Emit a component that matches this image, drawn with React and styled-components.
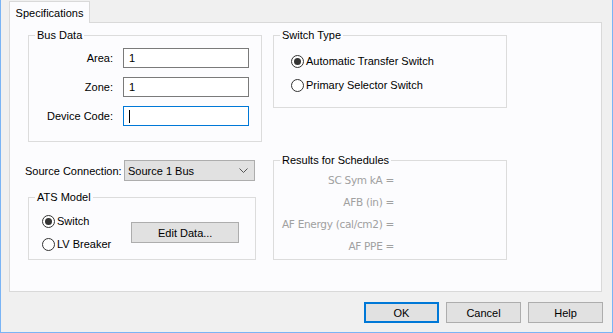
import React from "react";
import styled, { createGlobalStyle } from "styled-components";

const GlobalStyle = createGlobalStyle`
  html, body {
    margin: 0;
    padding: 0;
    background: #f0f0f0;
  }
  body {
    font-family: "Liberation Sans", Arial, sans-serif;
    font-size: 11px;
    color: #000;
  }
`;

const Window = styled.div`
  width: 613px;
  height: 333px;
  box-sizing: border-box;
  background: #f0f0f0;
  border: 1px solid #7ab4f5;
  border-top: none;
  display: flex;
  flex-direction: column;
`;

const TabStrip = styled.div`
  display: flex;
  padding: 1px 0 0 8px;
  height: 21px;
`;

const Tab = styled.div`
  width: 81px;
  box-sizing: border-box;
  border: 1px solid #d9d9d9;
  border-bottom: none;
  background: #fcfcfe;
  display: flex;
  align-items: center;
  justify-content: center;
  margin-bottom: -1px;
  position: relative;
  z-index: 1;
`;

const Panel = styled.div`
  margin-left: 8px;
  width: 593px;
  height: 270px;
  box-sizing: border-box;
  border: 1px solid #d9d9d9;
  background: #fcfcfe;
  padding: 12px 0 0 18px;
  display: grid;
  grid-template-columns: 234px 234px;
  grid-template-rows: 107px 100px;
  column-gap: 11px;
  row-gap: 18px;
  align-items: start;
`;

const Group = styled.div`
  position: relative;
  box-sizing: border-box;
  border: 1px solid #dcdcdc;
  width: ${(p) => p.$w || 234}px;
  height: ${(p) => p.$h}px;
  padding: ${(p) => p.$pad || "0"};
`;

const Legend = styled.span`
  position: absolute;
  top: -8px;
  left: 6px;
  padding: 0 2px;
  background: #fcfcfe;
  line-height: 14px;
`;

const FormRows = styled.div`
  display: flex;
  flex-direction: column;
  gap: 9px;
`;

const FieldRow = styled.div`
  display: flex;
  align-items: center;
  gap: 10px;
`;

const Label = styled.label`
  width: 84px;
  text-align: right;
`;

const TextBox = styled.div`
  width: 126px;
  height: 20px;
  box-sizing: border-box;
  border: 1px solid ${(p) => (p.$focus ? "#0078d7" : "#7a7a7a")};
  background: #fff;
  display: flex;
  align-items: center;
  padding-left: 5px;
`;

const Caret = styled.span`
  width: 1px;
  height: 13px;
  background: #000;
`;

const RadioList = styled.div`
  display: flex;
  flex-direction: column;
  gap: ${(p) => p.$gap}px;
`;

const RadioRow = styled.div`
  display: flex;
  align-items: center;
  gap: 2px;
  height: 14px;
  white-space: nowrap;
`;

const RadioCircle = styled.span`
  width: 13px;
  height: 13px;
  box-sizing: border-box;
  border-radius: 50%;
  border: 1px solid #333;
  background: #fff;
  display: flex;
  align-items: center;
  justify-content: center;
  &::after {
    content: "";
    width: 7px;
    height: 7px;
    border-radius: 50%;
    background: ${(p) => (p.$checked ? "#333" : "transparent")};
  }
`;

const LeftBottom = styled.div`
  display: flex;
  flex-direction: column;
  gap: 16px;
`;

const SourceRow = styled.div`
  display: flex;
  align-items: center;
  margin-left: -3px;
  height: 21px;
`;

const SourceLabel = styled.span`
  width: 99px;
  white-space: nowrap;
`;

const Select = styled.div`
  width: 131px;
  height: 21px;
  box-sizing: border-box;
  background: #e1e1e1;
  border: 1px solid #adadad;
  display: flex;
  align-items: center;
  justify-content: space-between;
  padding: 0 6px 0 3px;
`;

const AtsBody = styled.div`
  display: flex;
  align-items: center;
  gap: 20px;
`;

const Button = styled.button`
  width: ${(p) => p.$w || 75}px;
  height: 21px;
  box-sizing: border-box;
  margin: 0;
  background: #e1e1e1;
  border: ${(p) => (p.$default ? "2px solid #0078d7" : "1px solid #adadad")};
  font-family: inherit;
  font-size: 11px;
  color: #000;
  padding: 0;
`;

const Results = styled.div`
  display: grid;
  grid-template-columns: 120px;
  row-gap: 8px;
  padding-top: 12px;
  color: #a0a0a0;
  font-family: "DejaVu Sans", sans-serif;
  font-size: 10.5px;
  letter-spacing: -0.3px;
`;

const ResultLine = styled.div`
  text-align: right;
  line-height: 14px;
`;

const Footer = styled.div`
  display: flex;
  justify-content: flex-end;
  gap: 7px;
  padding: 10px 9px 0 0;
`;

const Chevron = () => (
  <svg width="9" height="6" viewBox="0 0 9 6">
    <path d="M0.5 0.5 L4.5 4.5 L8.5 0.5" fill="none" stroke="#555" strokeWidth="1" />
  </svg>
);

const Radio = ({ checked, children }) => (
  <RadioRow>
    <RadioCircle $checked={checked} />
    <span>{children}</span>
  </RadioRow>
);

const App = () => {
  return (
    <Window>
      <GlobalStyle />
      <TabStrip>
        <Tab>Specifications</Tab>
      </TabStrip>
      <Panel>
        <Group $h={107} $pad="12px 0 0 0">
          <Legend>Bus Data</Legend>
          <FormRows>
            <FieldRow>
              <Label>Area:</Label>
              <TextBox>1</TextBox>
            </FieldRow>
            <FieldRow>
              <Label>Zone:</Label>
              <TextBox>1</TextBox>
            </FieldRow>
            <FieldRow>
              <Label>Device Code:</Label>
              <TextBox $focus>
                <Caret />
              </TextBox>
            </FieldRow>
          </FormRows>
        </Group>
        <Group $h={73} $pad="18px 0 0 17px">
          <Legend>Switch Type</Legend>
          <RadioList $gap={10}>
            <Radio checked>Automatic Transfer Switch</Radio>
            <Radio>Primary Selector Switch</Radio>
          </RadioList>
        </Group>
        <LeftBottom>
          <SourceRow>
            <SourceLabel>Source Connection:</SourceLabel>
            <Select>
              <span>Source 1 Bus</span>
              <Chevron />
            </Select>
          </SourceRow>
          <Group $w={228} $h={63} $pad="16px 0 0 13px">
            <Legend>ATS Model</Legend>
            <AtsBody>
              <RadioList $gap={9}>
                <Radio checked>Switch</Radio>
                <Radio>LV Breaker</Radio>
              </RadioList>
              <Button $w={108}>Edit Data...</Button>
            </AtsBody>
          </Group>
        </LeftBottom>
        <Group $h={100}>
          <Legend>Results for Schedules</Legend>
          <Results>
            <ResultLine>SC Sym kA =</ResultLine>
            <ResultLine>AFB (in) =</ResultLine>
            <ResultLine>AF Energy (cal/cm2) =</ResultLine>
            <ResultLine>AF PPE =</ResultLine>
          </Results>
        </Group>
      </Panel>
      <Footer>
        <Button $default>OK</Button>
        <Button>Cancel</Button>
        <Button>Help</Button>
      </Footer>
    </Window>
  );
};

export default App;
